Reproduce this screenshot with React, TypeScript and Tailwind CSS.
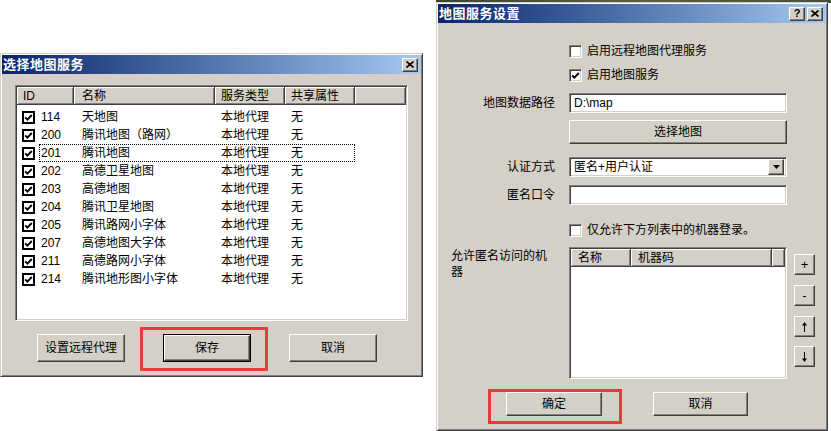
import React from 'react';

const raised =
  'bg-[#d4d0c8] border border-t-white border-l-white border-r-[#404040] border-b-[#404040] shadow-[inset_-1px_-1px_0_#808080]';
const sunken =
  'bg-white border border-t-[#808080] border-l-[#808080] border-r-white border-b-white shadow-[inset_1px_1px_0_#404040,inset_-1px_-1px_0_#d4d0c8]';
const windowFrame =
  'bg-[#d4d0c8] border border-t-[#d4d0c8] border-l-[#d4d0c8] border-r-[#404040] border-b-[#404040] shadow-[inset_1px_1px_0_#fff,inset_-1px_-1px_0_#808080] p-px flex flex-col';
const headerCell =
  'h-full flex items-center bg-[#d4d0c8] border-r border-b border-r-[#404040] border-b-[#404040] shadow-[inset_1px_1px_0_#fff,inset_-1px_-1px_0_#808080]';

const services = [
  ['114', '天地图'],
  ['200', '腾讯地图（路网）'],
  ['201', '腾讯地图'],
  ['202', '高德卫星地图'],
  ['203', '高德地图'],
  ['204', '腾讯卫星地图'],
  ['205', '腾讯路网小字体'],
  ['207', '高德地图大字体'],
  ['211', '高德路网小字体'],
  ['214', '腾讯地形图小字体'],
];

function Check({ size = 9 }: { size?: number }) {
  return (
    <svg width={size} height={size} viewBox="0 0 9 9">
      <polyline points="1.2,4.3 3.4,6.6 7.8,2" fill="none" stroke="black" strokeWidth="1.9" />
    </svg>
  );
}

function CloseIcon() {
  return (
    <svg width="8" height="7" viewBox="0 0 8 7">
      <path d="M0.5 0.5 L7.5 6.5 M7.5 0.5 L0.5 6.5" stroke="black" strokeWidth="1.6" />
    </svg>
  );
}

function TitleBar({ title, help }: { title: string; help?: boolean }) {
  return (
    <div className="h-[19px] shrink-0 flex items-center justify-between bg-linear-to-r from-[#0a246a] to-[#a6caf0] pl-[1px] pr-[3px]">
      <span className="text-white font-bold text-[13px] leading-none tracking-[0.5px]">{title}</span>
      <div className="flex gap-[2px]">
        {help && (
          <div className={`${raised} w-[16px] h-[14px] flex items-center justify-center`}>
            <span className="text-[11px] font-bold leading-none">?</span>
          </div>
        )}
        <div className={`${raised} w-[16px] h-[14px] flex items-center justify-center`}>
          <CloseIcon />
        </div>
      </div>
    </div>
  );
}

function Button({ label, className = '' }: { label: string; className?: string }) {
  return (
    <div className={`${raised} flex items-center justify-center ${className}`}>{label}</div>
  );
}

function RedMark({ className }: { className: string }) {
  return <div className={`absolute border-[3px] border-[#e53b3b] pointer-events-none ${className}`} />;
}

function SelectServiceDialog() {
  return (
    <div className={`absolute left-0 top-[53px] w-[423px] h-[324px] ${windowFrame}`}>
      <TitleBar title="选择地图服务" />
      <div className="pl-[13px] pt-[11px]">
        <div className={`${sunken} w-[393px] h-[236px] p-px`}>
          <div className="flex h-[18px]">
            <div className={`${headerCell} w-[57px] pl-[6px]`}>ID</div>
            <div className={`${headerCell} w-[141px] pl-[8px]`}>名称</div>
            <div className={`${headerCell} w-[70px] pl-[6px]`}>服务类型</div>
            <div className={`${headerCell} w-[70px] pl-[6px]`}>共享属性</div>
            <div className={`${headerCell} flex-1`} />
          </div>
          <div className="pt-[3px]">
            {services.map(([id, name]) => (
              <div key={id} className="flex h-[18px] items-center">
                <div className="w-[22px] pl-[5px]">
                  <div className="w-[13px] h-[13px] border-2 border-black bg-white flex items-center justify-center">
                    <Check />
                  </div>
                </div>
                <div
                  className={`flex h-[18px] items-center w-[316px] ${
                    id === '201' ? 'outline-1 outline-dotted outline-black -outline-offset-1' : ''
                  }`}
                >
                  <span className="w-[35px] pl-[2px]">{id}</span>
                  <span className="w-[141px] pl-[8px]">{name}</span>
                  <span className="w-[70px] pl-[6px]">本地代理</span>
                  <span className="pl-[6px]">无</span>
                </div>
              </div>
            ))}
          </div>
        </div>
        <div className="flex mt-[13px] ml-[22px] gap-[38px]">
          <Button label="设置远程代理" className="w-[88px] h-[28px]" />
          <div className="relative">
            <div className="w-[88px] h-[28px] border border-black">
              <Button label="保存" className="w-full h-full" />
            </div>
            <RedMark className="-left-[23px] -right-[17px] -top-[7px] -bottom-[9px]" />
          </div>
          <Button label="取消" className="w-[88px] h-[28px]" />
        </div>
      </div>
    </div>
  );
}

function SunkenCheck({ checked }: { checked?: boolean }) {
  return (
    <div className={`${sunken} w-[13px] h-[13px] flex items-center justify-center`}>
      {checked && <Check size={9} />}
    </div>
  );
}

function CheckRow({ label, checked, className }: { label: string; checked?: boolean; className: string }) {
  return (
    <div className={`flex items-center h-[16px] ml-[118px] ${className}`}>
      <SunkenCheck checked={checked} />
      <span className="ml-[5px]">{label}</span>
    </div>
  );
}

function FieldRow({ label, className, children }: { label: string; className: string; children: React.ReactNode }) {
  return (
    <div className={`flex items-center ${className}`}>
      <div className="w-[104px] text-right">{label}</div>
      <div className="ml-[14px] w-[218px]">{children}</div>
    </div>
  );
}

function ArrowIcon({ down }: { down?: boolean }) {
  return (
    <svg width="5" height="10" viewBox="0 0 5 10" className={down ? 'rotate-180' : ''}>
      <path d="M2.5 1.5 V10" stroke="black" strokeWidth="1" />
      <path d="M2.5 0 L5 3.5 H0 Z" fill="black" />
    </svg>
  );
}

function MapServiceSettingsDialog() {
  return (
    <div className={`absolute left-[436px] top-[2px] w-[392px] h-[429px] ${windowFrame}`}>
      <TitleBar title="地图服务设置" help />
      <div className="pl-[13px]">
        <CheckRow label="启用远程地图代理服务" className="mt-[20px]" />
        <CheckRow label="启用地图服务" checked className="mt-[8px]" />
        <FieldRow label="地图数据路径" className="mt-[10px]">
          <div className={`${sunken} h-[20px] flex items-center pl-[4px]`}>D:\map</div>
        </FieldRow>
        <FieldRow label="" className="mt-[7px]">
          <Button label="选择地图" className="h-[24px]" />
        </FieldRow>
        <FieldRow label="认证方式" className="mt-[13px]">
          <div className={`${sunken} h-[20px] flex items-center pl-[4px] pr-[2px]`}>
            <span className="flex-1">匿名+用户认证</span>
            <div className={`${raised} w-[16px] h-[16px] flex items-center justify-center`}>
              <svg width="7" height="4" viewBox="0 0 7 4">
                <path d="M0 0 H7 L3.5 4 Z" fill="black" />
              </svg>
            </div>
          </div>
        </FieldRow>
        <FieldRow label="匿名口令" className="mt-[8px]">
          <div className={`${sunken} h-[20px]`} />
        </FieldRow>
        <CheckRow label="仅允许下方列表中的机器登录。" className="mt-[17px]" />
        <div className="flex mt-[9px]">
          <div className="w-[104px] leading-[16px] pt-[1px]">允许匿名访问的机器</div>
          <div className={`${sunken} ml-[14px] w-[218px] h-[132px] p-px`}>
            <div className="flex h-[18px]">
              <div className={`${headerCell} w-[60px] pl-[7px]`}>名称</div>
              <div className={`${headerCell} w-[141px] pl-[7px]`}>机器码</div>
              <div className={`${headerCell} flex-1`} />
            </div>
          </div>
          <div className="ml-[7px] pt-[7px] flex flex-col gap-[10px]">
            <div className={`${raised} w-[21px] h-[21px] flex items-center justify-center text-[13px] leading-none`}>+</div>
            <div className={`${raised} w-[21px] h-[21px] flex items-center justify-center text-[12px] leading-none`}>-</div>
            <div className={`${raised} w-[21px] h-[21px] flex items-center justify-center`}>
              <ArrowIcon />
            </div>
            <div className={`${raised} w-[21px] h-[21px] flex items-center justify-center -mt-[1px]`}>
              <ArrowIcon down />
            </div>
          </div>
        </div>
        <div className="flex mt-[13px] ml-[55px] gap-[51px]">
          <div className="relative">
            <Button label="确定" className="w-[96px] h-[24px]" />
            <RedMark className="-left-[18px] -right-[20px] -top-[3px] -bottom-[8px]" />
          </div>
          <Button label="取消" className="w-[95px] h-[24px]" />
        </div>
      </div>
    </div>
  );
}

export default function App() {
  return (
    <div className="relative w-[831px] h-[431px] bg-white overflow-hidden text-[12px] leading-[14px] text-black font-['Liberation_Sans','Noto_Sans_CJK_SC',sans-serif]">
      <div className="absolute top-0 left-[436px] right-0 h-[3px] bg-linear-to-r from-[#3b4632] via-[#5c5e44] to-[#46513a]" />
      <SelectServiceDialog />
      <MapServiceSettingsDialog />
    </div>
  );
}
